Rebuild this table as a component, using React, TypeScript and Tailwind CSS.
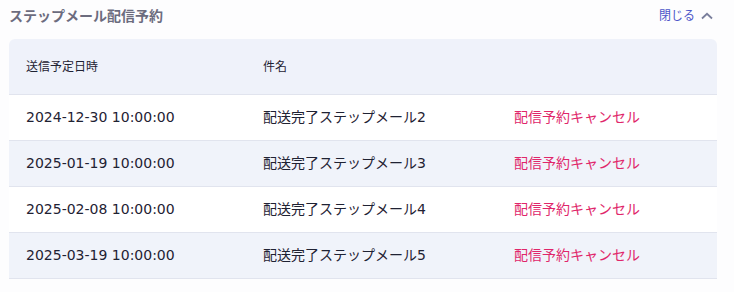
const rows = [
  { date: "2024-12-30 10:00:00", name: "配送完了ステップメール2" },
  { date: "2025-01-19 10:00:00", name: "配送完了ステップメール3" },
  { date: "2025-02-08 10:00:00", name: "配送完了ステップメール4" },
  { date: "2025-03-19 10:00:00", name: "配送完了ステップメール5" },
];

const font = { fontFamily: '"DejaVu Sans", "Noto Sans CJK JP", sans-serif' };

export default function App() {
  return (
    <div className="w-[734px] h-[292px] bg-[#fdfdfe] pl-[9px] pr-[17px]" style={font}>
      {/* Header */}
      <div className="h-[39px] flex items-start justify-between pt-[6px]">
        <h2 className="text-[14px] font-bold text-[#6c6c7e] leading-[20px]">ステップメール配信予約</h2>
        <button className="flex items-center gap-[6px] text-[12px] text-[#4c56c9] leading-[20px] mr-[4px]">
          閉じる
          <svg width="12" height="8" viewBox="0 0 12 8" fill="none" stroke="#7a7f9c" strokeWidth="1.8">
            <path d="M1 6.5 L6 1.8 L11 6.5" />
          </svg>
        </button>
      </div>

      {/* Table */}
      <div className="rounded-t-[6px] overflow-hidden">
        <div className="grid grid-cols-[237px_251px_1fr] pl-[17px] h-[56px] items-center bg-[#eff2fa] border-b border-[#e1e4ee] text-[12px] text-[#1f2233]">
          <div>送信予定日時</div>
          <div>件名</div>
          <div></div>
        </div>
        {rows.map((r, i) => (
          <div
            key={r.date}
            className={
              "grid grid-cols-[237px_251px_1fr] pl-[17px] h-[46px] items-center border-b border-[#e1e4ee] text-[14px] text-[#1f2233] " +
              (i % 2 === 0 ? "bg-white" : "bg-[#f0f3fa]")
            }
          >
            <div>{r.date}</div>
            <div>{r.name}</div>
            <div className="text-[#e0266a]">配信予約キャンセル</div>
          </div>
        ))}
      </div>
    </div>
  );
}
